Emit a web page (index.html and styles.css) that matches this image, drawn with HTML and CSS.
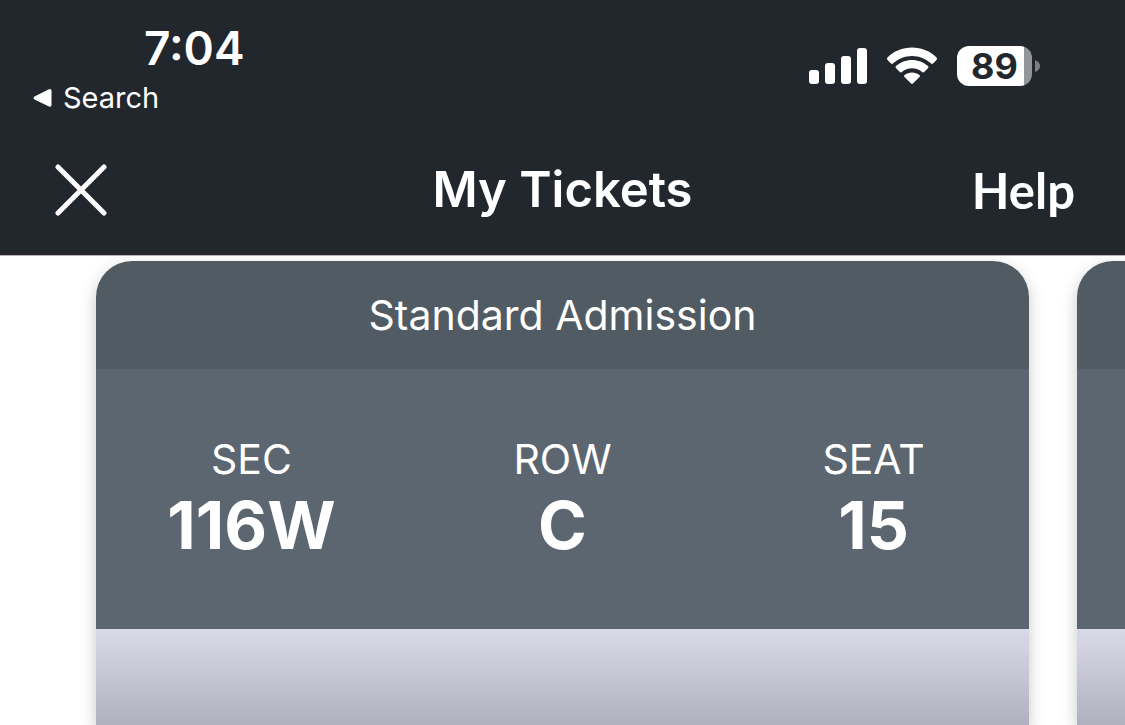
FILE: index.html
```html
<!DOCTYPE html>
<html lang="en">
<head>
<meta charset="utf-8">
<meta name="viewport" content="width=device-width, initial-scale=1">
<title>My Tickets</title>
<link rel="stylesheet" href="styles.css">
</head>
<body>
<header class="header">
  <div class="status">
    <div class="status-left">
      <time class="clock">7:04</time>
      <a class="back" href="#search">
        <svg width="20" height="20" viewBox="0 0 20 20" aria-hidden="true"><path d="M1.500 8.600 16 1.200Q18.500.3 18.500 2.800V16.800Q18.500 19.300 16 18.400L1.500 11.400Q-.4 10 1.500 8.600Z"/></svg>
        Search
      </a>
    </div>
    <div class="status-icons">
      <svg width="58" height="38" viewBox="0 0 58 38" role="img" aria-label="Signal">
        <rect x="0" y="23" width="10" height="14" rx="3"/>
        <rect x="16" y="16" width="10" height="21" rx="3"/>
        <rect x="32" y="9" width="10" height="28" rx="3"/>
        <rect x="48" y="1" width="10" height="36" rx="3"/>
      </svg>
      <svg width="52" height="38" viewBox="0 0 52 38" role="img" aria-label="Wi-Fi">
        <path d="M26 0.5C35.5 0.5 44.5 4.3 50.5 10.4Q51.7 11.7 50.5 12.9L47 16.4Q45.9 17.4 44.8 16.3C39.8 11.600 33 8.900 26 8.900C19 8.900 12.200 11.600 7.200 16.300Q6.100 17.400 5 16.400L1.500 12.900Q.3 11.700 1.500 10.400C7.500 4.300 16.500.5 26 .5Z"/>
        <path d="M26 13C32 13 37.700 15.300 42 19.100Q43 20.200 42 21.300L38.200 25Q37.200 25.900 36.100 25C33.300 22.600 29.800 21.300 26 21.300C22.200 21.300 18.700 22.600 15.900 25Q14.800 25.900 13.800 25L10 21.300Q9 20.200 10 19.100C14.300 15.300 20 13 26 13Z"/>
        <path d="M26 25.500C28.800 25.500 31.400 26.400 33.500 27.900Q34.500 29 33.500 30L27.200 36.300Q26 37.400 24.800 36.300L18.500 30Q17.500 29 18.500 27.900C20.600 26.400 23.200 25.500 26 25.500Z"/>
      </svg>
      <div class="battery">
        <span class="battery-body">89</span>
        <svg width="6" height="14" viewBox="0 0 6 14" aria-hidden="true"><path class="battery-cap" d="M0 1Q5 3 5 7T0 13Z"/></svg>
      </div>
    </div>
  </div>
  <nav class="nav">
    <button class="close" type="button" aria-label="Close">
      <svg width="52" height="52" viewBox="0 0 52 52" aria-hidden="true"><path d="M3 3 49 49M49 3 3 49"/></svg>
    </button>
    <h1 class="title">My Tickets</h1>
    <a class="help" href="#help">Help</a>
  </nav>
</header>
<main class="tickets">
  <article class="ticket">
    <h2 class="kind">Standard Admission</h2>
    <dl class="place">
      <div><dt>SEC</dt><dd>116W</dd></div>
      <div><dt>ROW</dt><dd>C</dd></div>
      <div><dt>SEAT</dt><dd>15</dd></div>
    </dl>
    <div class="art"></div>
  </article>
  <article class="ticket" aria-label="Next ticket">
    <div class="kind"></div>
    <div class="place"></div>
    <div class="art"></div>
  </article>
</main>
</body>
</html>
```
FILE: styles.css
```css
* { box-sizing: border-box; }

body {
  margin: 0;
  height: 100vh;
  display: flex;
  flex-direction: column;
  overflow: hidden;
  background: #fff;
  color: #fff;
  font-family: Inter, "Liberation Sans", sans-serif;
}

h1, h2, dl, dd { margin: 0; }
a { color: inherit; text-decoration: none; }
svg { display: block; flex: none; fill: #fff; }

.header {
  background: #22262d;
  background-clip: padding-box;
  border-bottom: 1px solid #b9b2bd;
}

.status {
  display: flex;
  justify-content: space-between;
  align-items: flex-start;
  padding: 20px 84px 0 33px;
}

.clock {
  display: block;
  padding-left: 111px;
  font-size: 46px;
  font-weight: 600;
  line-height: 56px;
}

.back {
  display: flex;
  align-items: center;
  gap: 10px;
  font-size: 29px;
  line-height: 44px;
}

.status-icons {
  display: flex;
  align-items: center;
  gap: 19px;
  padding-top: 26px;
}

.battery {
  display: flex;
  align-items: center;
  gap: 3px;
}

.battery-body {
  width: 75px;
  border-radius: 12px;
  background: linear-gradient(90deg, #fff 67px, #92959a 67px);
  color: #22262d;
  font-size: 36px;
  font-weight: 700;
  line-height: 40px;
  text-align: center;
}

.battery-cap { fill: #7b7e83; }

.nav {
  display: grid;
  grid-template-columns: 1fr auto 1fr;
  align-items: center;
  padding: 35px 50px 30px;
}

.close {
  justify-self: start;
  padding: 0 5px;
  border: 0;
  background: none;
}

.close svg {
  fill: none;
  stroke: #fff;
  stroke-width: 5;
  stroke-linecap: round;
}

.title {
  font-size: 49px;
  font-weight: 600;
  line-height: 70px;
}

.help {
  justify-self: end;
  font-family: Lato, sans-serif;
  font-size: 49px;
  font-weight: 700;
  line-height: 70px;
}

.tickets {
  flex: 1;
  display: flex;
  gap: 48px;
  padding: 5px 96px 0;
  overflow: hidden;
}

.ticket {
  flex: 0 0 100%;
  display: flex;
  flex-direction: column;
  border-radius: 36px 36px 0 0;
  box-shadow: 0 6px 16px rgba(0, 0, 0, 0.22);
}

.kind {
  min-height: 108px;
  border-radius: 36px 36px 0 0;
  background: #515b63;
  font-size: 41px;
  font-weight: 400;
  line-height: 108px;
  text-align: center;
}

.place {
  display: grid;
  grid-template-columns: repeat(3, 1fr);
  min-height: 260px;
  padding-top: 64px;
  background: #5c6670;
  text-align: center;
}

.place dt {
  font-size: 41px;
  line-height: 52px;
}

.place dd {
  font-size: 66px;
  font-weight: 700;
  line-height: 80px;
}

.art {
  flex: 1;
  background: linear-gradient(#d8dae8, #d3d3e1 16%, #b0b1be);
}
```
